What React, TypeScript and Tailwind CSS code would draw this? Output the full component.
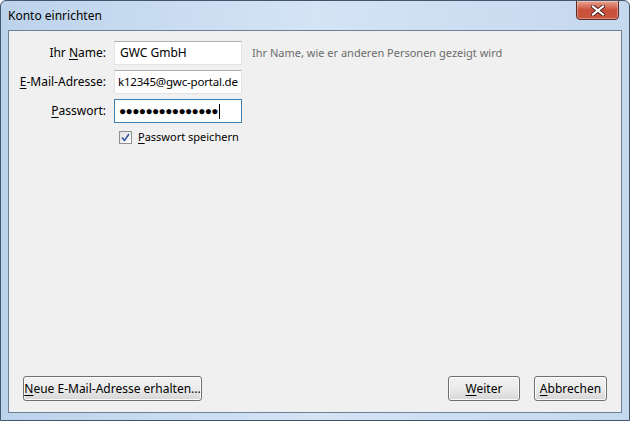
import React from "react";

const font = { fontFamily: '"Noto Sans", "Open Sans", sans-serif' };

const Btn = ({ u, rest, className }: { u: string; rest: string; className: string }) => (
  <button
    className={`h-[25px] whitespace-nowrap rounded-[3px] border border-[#707070] bg-gradient-to-b from-[#f2f2f2] via-[#ebebeb] to-[#d6d6d6] text-[12px] text-black shadow-[inset_0_0_0_1px_#fcfcfc] ${className}`}
  >
    <span className="underline underline-offset-2">{u}</span>
    {rest}
  </button>
);

export default function App() {
  return (
    <div
      className="relative w-[630px] h-[421px] overflow-hidden rounded-t-[6px] border border-[#44546a] bg-gradient-to-r from-[#bcd3ec] via-[#d4e4f5] to-[#c4d8ee] flex flex-col"
      style={font}
    >
      {/* title bar */}
      <div className="h-[29px] flex items-center pl-[7px] text-[12px] text-black">Konto einrichten</div>
      <div className="absolute right-[10px] top-[-1px] w-[43px] h-[20px] rounded-b-[4px] border border-[#5b2a22] bg-gradient-to-b from-[#e8a493] via-[#c9503a] to-[#c8553f] flex items-center justify-center shadow-[inset_0_0_0_1px_rgba(255,255,255,0.35)]">
        <svg width="14" height="11" viewBox="0 0 14 11">
          <path d="M2 1.5 L12 9.5 M12 1.5 L2 9.5" stroke="#4a1d16" strokeWidth="4" strokeLinecap="square" />
          <path d="M2 1.5 L12 9.5 M12 1.5 L2 9.5" stroke="#ffffff" strokeWidth="2.2" strokeLinecap="square" />
        </svg>
      </div>

      {/* client area */}
      <div className="flex-1 mx-[7px] mb-[7px] border border-[#6f8096] bg-[#f0f0f0] flex flex-col text-[12px] text-black">
        <div className="pt-[10px] flex flex-col gap-[5px]">
          <div className="flex items-center">
            <div className="w-[97px] text-right">
              Ihr <span className="underline underline-offset-2">N</span>ame:
            </div>
            <div className="ml-[8px] w-[128px] h-[24px] border border-[#e3e3e3] border-t-[#abadb3] bg-white px-[5px] flex items-center text-[12px]">
              GWC GmbH
            </div>
            <div className="ml-[10px] text-[11px] text-[#6d6d6d]">Ihr Name, wie er anderen Personen gezeigt wird</div>
          </div>
          <div className="flex items-center">
            <div className="w-[97px] text-right">
              <span className="underline underline-offset-2">E</span>-Mail-Adresse:
            </div>
            <div className="ml-[8px] w-[128px] h-[24px] border border-[#e3e3e3] border-t-[#abadb3] bg-white pl-[3px] flex items-center text-[11.5px] tracking-[-0.2px] overflow-hidden whitespace-nowrap">
              k12345@gwc-portal.de
            </div>
          </div>
          <div className="flex items-center">
            <div className="w-[97px] text-right">
              <span className="underline underline-offset-2">P</span>asswort:
            </div>
            <div className="ml-[8px] w-[128px] h-[24px] border border-[#3c7fb1] bg-white pl-[4px] flex items-center text-[12px] tracking-[-0.65px]">
              ●●●●●●●●●●●●●●●
              <span className="ml-[1px] w-px h-[15px] bg-black" />
            </div>
          </div>
          <div className="flex items-center mt-[1px] ml-[110px]">
            <div className="w-[13px] h-[13px] border border-[#8e8f8f] bg-gradient-to-br from-[#e0e0e0] to-[#ffffff] flex items-center justify-center">
              <svg width="9" height="9" viewBox="0 0 9 9">
                <path d="M1 4.5 L3.5 7.5 L8 1" stroke="#3b58a8" strokeWidth="1.6" fill="none" />
              </svg>
            </div>
            <div className="ml-[6px] text-[11px]">
              <span className="underline underline-offset-2">P</span>asswort speichern
            </div>
          </div>
        </div>

        <div className="mt-auto mb-[11px] flex items-center px-[14px]">
          <Btn u="N" rest="eue E-Mail-Adresse erhalten..." className="w-[179px]" />
          <Btn u="W" rest="eiter" className="ml-auto w-[72px]" />
          <Btn u="A" rest="bbrechen" className="ml-[14px] w-[73px]" />
        </div>
      </div>
    </div>
  );
}
